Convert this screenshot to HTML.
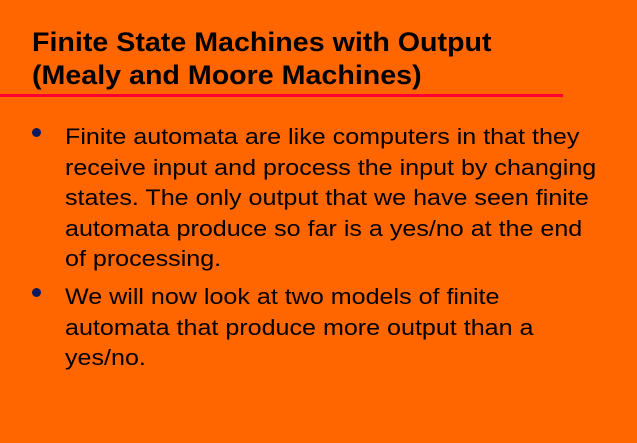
<!DOCTYPE html>
<html><head><style>
html,body{margin:0;padding:0}
body{width:637px;height:443px;background:#ff6600;position:relative;overflow:hidden;font-family:"Liberation Sans",Arial,sans-serif;color:#000}
.t{position:absolute;left:32px;top:26px;font-weight:bold;font-size:27px;line-height:33px;white-space:nowrap;transform:scaleX(1.06);transform-origin:0 0}
.line{position:absolute;left:0;top:94px;width:563px;height:3px;background:#ff0033}
.b{position:absolute;left:65px;font-size:22px;line-height:30.5px;white-space:nowrap;transform:scaleX(1.14);transform-origin:0 0}
.dot{position:absolute;left:32px;width:9px;height:9px;border-radius:50%;background:#0a1a5c}
</style></head><body>
<div class="t">Finite State Machines with Output<br>(Mealy and Moore Machines)</div>
<div class="line"></div>
<div class="dot" style="top:128px"></div>
<div class="b" style="top:122px">Finite automata are like computers in that they<br>receive input and process the input by changing<br>states. The only output that we have seen finite<br>automata produce so far is a yes/no at the end<br>of processing.</div>
<div class="dot" style="top:288px"></div>
<div class="b" style="top:282px">We will now look at two models of finite<br>automata that produce more output than a<br>yes/no.</div>
</body></html>
